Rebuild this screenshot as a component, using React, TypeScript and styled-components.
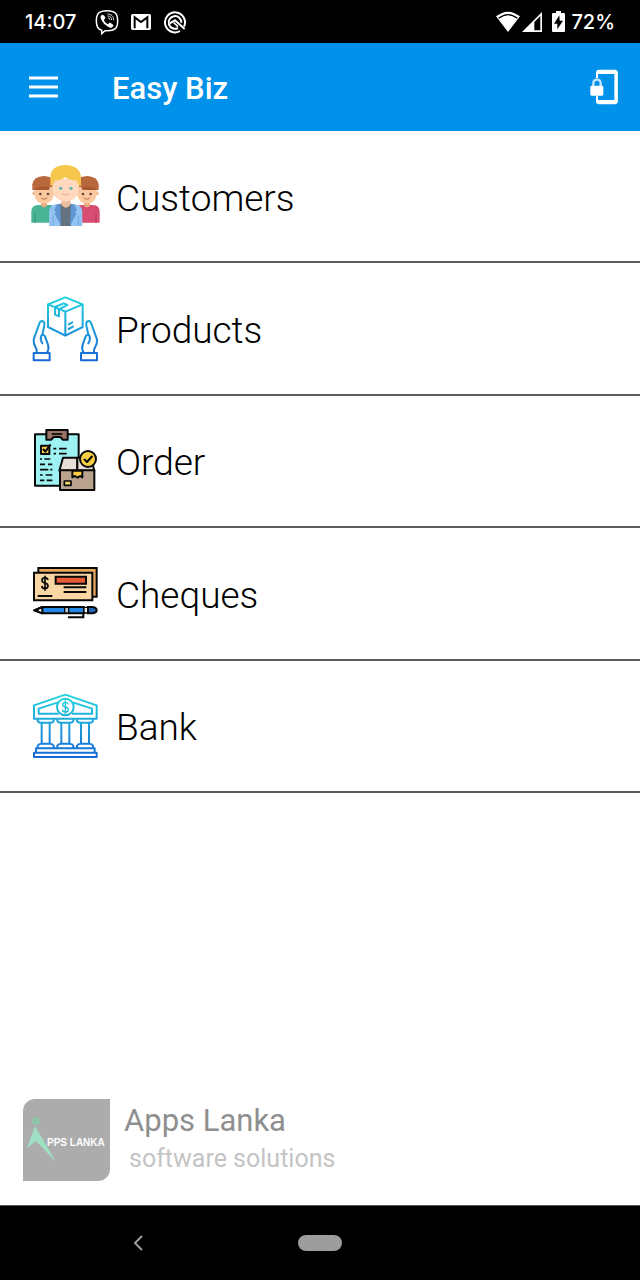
import styled, { createGlobalStyle } from "styled-components"

const menuItems = [
  { label: "Customers", Icon: CustomersIcon },
  { label: "Products", Icon: ProductsIcon },
  { label: "Order", Icon: OrderIcon },
  { label: "Cheques", Icon: ChequesIcon },
  { label: "Bank", Icon: BankIcon },
]

const App = () => {
  return (
    <Page>
      <GlobalStyle />
      <StatusBar />
      <Header />
      <Main>
        <MenuList>
          {menuItems.map(({ label, Icon }) => (
            <MenuRow key={label}>
              <MenuLink href="#">
                <Icon />
                <MenuLabel>{label}</MenuLabel>
              </MenuLink>
            </MenuRow>
          ))}
        </MenuList>
        <Brand />
      </Main>
      <SystemNav>
        <NavButton type="button" aria-label="Back">
          <svg width="18" height="20" viewBox="0 0 18 20">
            <path d="M14 3L7 10l7 7" fill="none" stroke="#9c9c9c" strokeWidth="2" />
          </svg>
        </NavButton>
        <HomePill type="button" aria-label="Home" />
        <span />
      </SystemNav>
    </Page>
  )
}
export default App

function StatusBar() {
  return (
    <StatusHolder>
      <Clock>14:07</Clock>
      <Notifications>
        <svg width="24" height="26" viewBox="0 0 72 78">
          <path
            d="M36 5C12 5 4 13 4 36c0 17 5 25 16 28v10l10-9c29 2 38-6 38-29C68 13 60 5 36 5z"
            fill="none"
            stroke="#fff"
            strokeWidth="4.5"
          />
          <path
            d="M22 17c-4 2-7 6-5 11 5 13 15 23 28 28 5 2 8-2 10-6 1-3-8-9-11-9-3 0-3 5-6 4-6-2-10-7-11-12 0-3 4-3 4-6 0-3-5-11-9-10z"
            fill="#fff"
          />
          <path d="M37 15c12 0 19 7 19 19M38 21c8 0 12 5 12 12M39 27c4 0 6 2 6 6" fill="none" stroke="#fff" strokeWidth="2.5" />
        </svg>
        <svg width="22" height="18" viewBox="0 0 66 54">
          <rect x="3" y="3" width="60" height="48" rx="5" fill="#fff" />
          <path d="M14 46V13l19 14 19-14v33" fill="none" stroke="#000" strokeWidth="6" />
        </svg>
        <svg width="24" height="24" viewBox="0 0 72 72">
          <path d="M51 63A30 30 0 1 1 63 50" fill="none" stroke="#fff" strokeWidth="6" />
          <path d="M45 54A19 19 0 1 1 55 38" fill="none" stroke="#fff" strokeWidth="6" />
          <path d="M20 40l16-9 29 26" fill="none" stroke="#fff" strokeWidth="6" />
          <path d="M32 38l13 12" stroke="#fff" strokeWidth="5" />
        </svg>
      </Notifications>
      <Signals>
        <svg width="24" height="22" viewBox="0 0 72 66">
          <path d="M0 16Q36-12 72 16L36 63z" fill="#fff" />
          <path d="M8 22Q36 0 64 22" fill="none" stroke="#000" strokeWidth="4" />
        </svg>
        <svg width="20" height="20" viewBox="0 0 60 60">
          <path d="M60 0v60H0z" fill="#fff" />
          <path d="M55 12v43H37V30z" fill="#000" />
        </svg>
        <BatteryIcon viewBox="0 0 39 63">
          <path d="M3 6h9V0h15v6h9q3 0 3 3v51q0 3-3 3H3q-3 0-3-3V9q0-3 3-3z" fill="#fff" />
          <path d="M22 13L6 38h10v17l17-26H23z" fill="#000" />
        </BatteryIcon>
        72%
      </Signals>
    </StatusHolder>
  )
}

function Header() {
  return (
    <HeaderBar>
      <IconButton type="button" aria-label="Open menu">
        <svg width="30" height="22" viewBox="0 0 30 22">
          <path d="M0 2h29M0 11h29M0 20h29" stroke="#fff" strokeWidth="3" />
        </svg>
      </IconButton>
      <Title>Easy Biz</Title>
      <IconButton type="button" aria-label="Lock">
        <svg width="28" height="36" viewBox="0 0 84 108">
          <path d="M21 28V11q0-6 6-6h47q6 0 6 6v86q0 6-6 6H27q-6 0-6-6V80" fill="none" stroke="#fff" strokeWidth="6" />
          <path d="M22 5h56v10H22zM22 93h56v10H22z" fill="#fff" />
          <path d="M73 8h10v92H73z" fill="#fff" />
          <path d="M10 54V44q0-12 11-12t11 12v10" fill="none" stroke="#c4e7ff" strokeWidth="7" />
          <rect x="1" y="50" width="39" height="30" rx="4" fill="#fff" />
        </svg>
      </IconButton>
    </HeaderBar>
  )
}

function Brand() {
  return (
    <BrandHolder>
      <BrandLogo viewBox="0 0 87 82" role="img" aria-label="Apps Lanka logo">
        <circle cx="13" cy="22" r="4" fill="#8fc4ab" />
        <path d="M12 27L4 49l9-7 20 21z" fill="#a0e0c4" />
        <text x="24" y="47" fill="#fff" fontFamily="Liberation Sans, Arial, sans-serif" fontWeight="700" fontSize="10">
          PPS LANKA
        </text>
      </BrandLogo>
      <BrandText>
        <BrandName>Apps Lanka</BrandName>
        <BrandTagline>software solutions</BrandTagline>
      </BrandText>
    </BrandHolder>
  )
}

function SideKid({ shirt, shade }: { shirt: string; shade: string }) {
  return (
    <>
      <path d="M34 203v-33q0-19 20-20h36q19 1 19 20v33z" fill={shirt} />
      <path d="M45 176v27M98 176v27" stroke={shade} strokeWidth="4" />
      <path d="M63 140h18v12q-9 10-18 0z" fill="#e8ac82" />
      <circle cx="43" cy="115" r="6" fill="#efb68f" />
      <circle cx="101" cy="115" r="6" fill="#efb68f" />
      <path d="M43 97h58v20q-2 27-29 29-27-2-29-29z" fill="#fbc9a0" />
      <path d="M37 105V88q4-24 35-25 31 1 35 25v17H37z" fill="#b9673c" />
      <path d="M45 101q27-13 54 0v4H45z" fill="#a8582f" />
      <circle cx="61" cy="117" r="4" fill="#6b4433" />
      <circle cx="84" cy="117" r="4" fill="#6b4433" />
      <path d="M63 129q9 8 19 0" fill="none" stroke="#b76f50" strokeWidth="3" />
    </>
  )
}

function CustomersIcon() {
  return (
    <MenuIcon viewBox="0 3 270 240">
      <SideKid shirt="#48b493" shade="#379b7c" />
      <g transform="translate(273 0) scale(-1 1)">
        <SideKid shirt="#d84e72" shade="#bd3c60" />
      </g>
      <path d="M87 213v-42q0-20 23-23h54q23 3 23 23v42z" fill="#93c3f3" />
      <path d="M119 146h36l-2 67h-32z" fill="#64717f" />
      <path d="M111 148l10-1 2 65-20-38 7-2-8-6zM163 148l-10-1-3 65 20-38-7-2 8-6z" fill="#5f95d2" />
      <path d="M99 181v32M175 181v32" stroke="#70a8e2" strokeWidth="3" />
      <path d="M124 132h27v17q-13 18-27 0z" fill="#edbd9e" />
      <circle cx="96" cy="104" r="9" fill="#f3c6a5" />
      <circle cx="178" cy="104" r="9" fill="#f3c6a5" />
      <path d="M97 72h80v31q-3 33-40 37-37-4-40-37z" fill="#ffd8bd" />
      <path d="M91 92V66q1-34 45-36 44 2 47 36v27q-9-1-13-17-22 0-35-9-14 10-31 10-3 14-13 15z" fill="#f5c84d" />
      <circle cx="122" cy="100" r="5" fill="#62b5b0" />
      <circle cx="153" cy="100" r="5" fill="#62b5b0" />
      <path d="M125 116q12 9 24 0" fill="none" stroke="#e7a288" strokeWidth="3" />
    </MenuIcon>
  )
}

function Hand() {
  return (
    <>
      <path d="M50 193q1-11-4-18-6-9-5-22l16-44q3-12 10-11 8 2 6 13l-6 28" />
      <path d="M67 165q-7-12-4-21 5-9 12 0l9 25q4 13-3 24" />
      <path d="M41 194h48v22H41z" />
    </>
  )
}

function ProductsIcon() {
  return (
    <MenuIcon viewBox="0 2 270 240">
      <defs>
        <linearGradient id="productsFill" gradientUnits="userSpaceOnUse" x1="0" y1="25" x2="0" y2="217">
          <stop offset="0" stopColor="#20d4df" />
          <stop offset="1" stopColor="#1765d5" />
        </linearGradient>
      </defs>
      <g fill="none" stroke="url(#productsFill)" strokeWidth="6" strokeLinejoin="round" strokeLinecap="round">
        <path d="M136 27l52 21v68l-52 26-52-26V48zM84 48l52 22 52-22M136 70v71" />
        <path d="M105 56l26-11 11 5-25 13v21l-12-5zM105 56l12 7M146 108l11-6M146 122l13-7" />
        <Hand />
        <g transform="translate(272 0) scale(-1 1)">
          <Hand />
        </g>
      </g>
    </MenuIcon>
  )
}

function OrderIcon() {
  return (
    <MenuIcon viewBox="0 2 270 240">
      <g stroke="#080808" strokeWidth="6" strokeLinejoin="round">
        <path d="M45 42h131v154H45z" fill="#9ff2f2" />
        <path d="M79 29h64v29h-15l-7-8h-20l-7 8H79z" fill="#9a7565" />
        <path d="M95 41h32" strokeWidth="5" />
        <path d="M63 76h25v25H63z" fill="#f8ce45" />
        <path d="M69 86l7 8 16-22" fill="none" />
        <path
          d="M100 85h9M117 85h23M101 100h7M117 100h23M60 116h6M73 116h18M60 132h15M84 132h13M60 148h25M91 148h6M60 164h8M77 164h20M60 180h13M80 180h17"
          fill="none"
          strokeWidth="5"
        />
        <path d="M129 112h43v39h-54z" fill="#e7ded5" />
        <path d="M172 112h41l10 39h-51z" fill="#e7ded5" />
        <path d="M120 150h103v59H120z" fill="#b9a28e" />
        <path d="M157 151v20l8-4 8 5 7-5 7 4v-20z" fill="#f8ce45" />
        <path d="M133 182h20v13h-20z" fill="#f4d76b" strokeWidth="5" />
        <circle cx="204" cy="116" r="24" fill="#f8ce45" />
        <path d="M192 116l9 9 16-18" fill="none" />
      </g>
    </MenuIcon>
  )
}

function ChequesIcon() {
  return (
    <MenuIcon viewBox="0 -5 270 240">
      <g stroke="#080808" strokeWidth="6">
        <path d="M55 40h175v86H55z" fill="#e9a860" />
        <path d="M42 54h175v83H42z" fill="#fbd6a5" />
        <path d="M107 66h91v21h-91z" fill="#e75a36" />
        <path d="M131 98h68M131 112h68M53 124h44" />
        <path d="M84 76q-2-7-10-7-8 1-8 8 0 6 9 8 9 2 9 9 0 7-9 8-8 0-10-8M75 63v45" fill="none" strokeWidth="5" />
        <path d="M67 157h125v19H67L42 167z" fill="#2588e5" strokeLinejoin="round" />
        <path d="M67 157v19L44 167z" fill="#f8eee1" strokeLinejoin="round" />
        <path d="M42 167l13-5v9z" fill="#080808" strokeWidth="2" />
        <path d="M134 158h12v17h-12z" fill="#b7c7d6" strokeWidth="4" />
        <path d="M192 158h12v17h-12z" fill="#eee" strokeWidth="4" />
        <path d="M204 157h14q12 2 12 10 0 8-12 9h-14z" fill="#2464b5" />
        <path d="M190 174v14h-46" fill="none" />
      </g>
    </MenuIcon>
  )
}

function BankIcon() {
  return (
    <MenuIcon viewBox="0 2 270 240">
      <defs>
        <linearGradient id="bankFill" gradientUnits="userSpaceOnUse" x1="0" y1="28" x2="0" y2="216">
          <stop offset="0" stopColor="#22d5df" />
          <stop offset="1" stopColor="#1668d6" />
        </linearGradient>
      </defs>
      <g fill="none" stroke="url(#bankFill)" strokeWidth="6" strokeLinejoin="round">
        <path d="M42 60l94-32 94 32v40H42z" />
        <path d="M114 51L56 70v15h60M158 51l58 19v15h-60" />
        <circle cx="136" cy="65" r="25" />
        <path d="M144 57q-1-6-8-6-8 1-8 7 0 5 8 7 9 2 9 8 0 7-9 7-8 0-9-7M136 45v41" strokeWidth="4" />
        {[77, 136, 195].map((x) => (
          <g key={x} transform={`translate(${x} 0)`}>
            <path d="M-24 101v6q3 6 12 5h24q9 1 12-5v-6M-12 112v63M12 112v63" />
            <path d="M-24 188v-7q3-6 12-6h24q9 0 12 6v7" />
          </g>
        ))}
        <path d="M48 202v-13h176v13M42 202h188v13H42z" />
      </g>
    </MenuIcon>
  )
}

const GlobalStyle = createGlobalStyle`
  * {
    box-sizing: border-box;
  }
  body {
    margin: 0;
    background: #fff;
    font-family: Roboto, "Liberation Sans", sans-serif;
  }
  svg {
    display: block;
    flex: none;
  }
  button {
    padding: 0;
    border: 0;
    background: none;
    cursor: pointer;
  }
`
const Page = styled.div`
  min-height: 100vh;
  display: flex;
  flex-direction: column;
`
const StatusHolder = styled.div`
  height: 43px;
  padding: 0 25px;
  display: flex;
  align-items: center;
  background: #000;
  color: #fff;
  font-family: Inter, Roboto, sans-serif;
  font-size: 20px;
  font-weight: 500;
`
const Clock = styled.time`
  min-width: 54px;
`
const Notifications = styled.div`
  display: flex;
  align-items: center;
  gap: 11px;
  margin-left: 16px;
`
const Signals = styled.div`
  display: flex;
  align-items: center;
  gap: 2px;
  margin-left: auto;
`
const BatteryIcon = styled.svg`
  width: 13px;
  height: 21px;
  margin: 0 4px 0 8px;
`
const HeaderBar = styled.header`
  height: 88px;
  padding: 0 22px 0 29px;
  display: flex;
  align-items: center;
  background: #0091ea;
  color: #fff;
`
const IconButton = styled.button`
  display: flex;
`
const Title = styled.h1`
  flex: 1;
  margin: 0 0 0 53px;
  padding-top: 2px;
  font-size: 31px;
  font-weight: 500;
`
const Main = styled.main`
  flex: 1;
  display: flex;
  flex-direction: column;
  justify-content: space-between;
`
const MenuList = styled.ul`
  min-height: 662px;
  margin: 0;
  padding: 0;
  display: grid;
  grid-template-rows: repeat(5, 1fr);
  list-style: none;
`
const MenuRow = styled.li`
  display: flex;
  border-bottom: 2px solid #5c5c5c;
`
const MenuLink = styled.a`
  flex: 1;
  padding: 0 20px;
  display: flex;
  align-items: center;
  gap: 6px;
  color: #000;
  text-decoration: none;
`
const MenuIcon = styled.svg`
  width: 90px;
  height: 80px;
`
const MenuLabel = styled.span`
  padding-top: 4px;
  font-size: 37px;
  font-weight: 300;
`
const BrandHolder = styled.footer`
  padding: 0 23px 24px;
  display: flex;
  align-items: center;
  gap: 14px;
`
const BrandLogo = styled.svg`
  width: 87px;
  height: 82px;
  border-radius: 12px 0;
  background: #acacac;
`
const BrandText = styled.div`
  padding-bottom: 2px;
  display: flex;
  flex-direction: column;
`
const BrandName = styled.span`
  color: #8f8f8f;
  font-size: 31px;
  line-height: 40px;
`
const BrandTagline = styled.span`
  padding-left: 5px;
  color: #c4c4c4;
  font-size: 25px;
  line-height: 36px;
`
const SystemNav = styled.nav`
  height: 75px;
  padding: 0 20%;
  display: grid;
  grid-template-columns: 1fr auto 1fr;
  align-items: center;
  border-top: 1px solid #555;
  background: #000;
`
const NavButton = styled.button`
  justify-self: start;
`
const HomePill = styled.button`
  && {
    width: 44px;
    height: 16px;
    border-radius: 8px;
    background: #9c9c9c;
  }
`
